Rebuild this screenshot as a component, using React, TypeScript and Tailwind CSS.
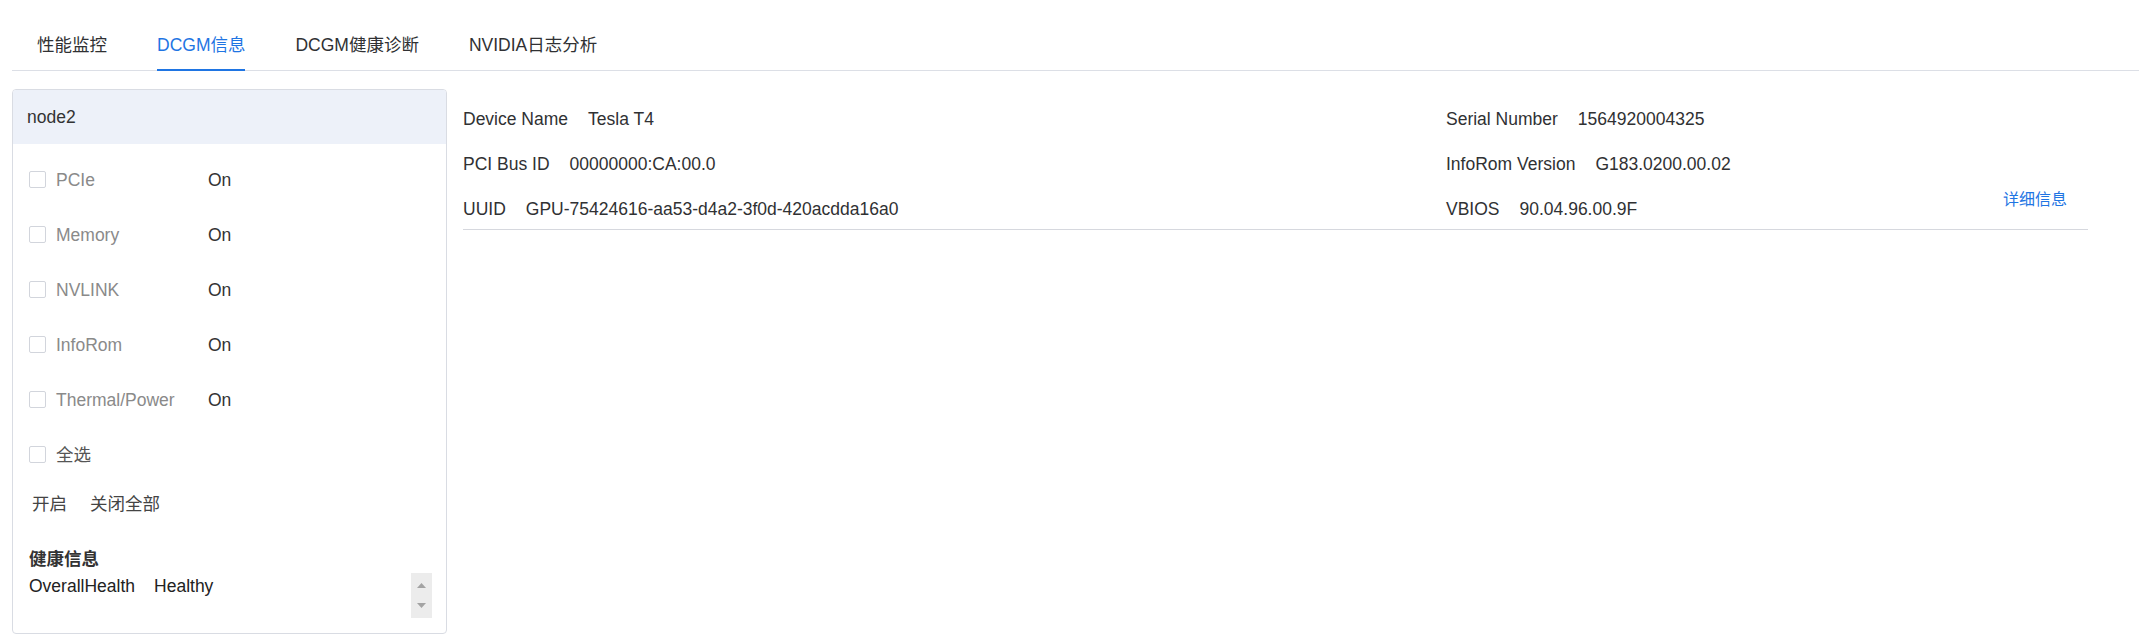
import React from "react";

const font = { fontFamily: '"Liberation Sans", "Noto Sans CJK SC", sans-serif' };

const tabs = ["性能监控", "DCGM信息", "DCGM健康诊断", "NVIDIA日志分析"];

const checks = [
  { name: "PCIe", value: "On" },
  { name: "Memory", value: "On" },
  { name: "NVLINK", value: "On" },
  { name: "InfoRom", value: "On" },
  { name: "Thermal/Power", value: "On" },
];

const Checkbox = () => (
  <span className="w-[17px] h-[17px] shrink-0 rounded-[2px] border border-[#d2d5dc] bg-white" />
);

const Field = ({ label, value }: { label: string; value: string }) => (
  <div className="flex gap-[20px]">
    <span>{label}</span>
    <span>{value}</span>
  </div>
);

export default function App() {
  const active = 1;

  return (
    <div style={font} className="w-[2139px] h-[644px] bg-white text-[17.5px] leading-[24px] text-[#303133]">
      {/* tabs */}
      <div className="ml-[12px] flex border-b border-[#dcdfe6] pt-[33px]">
        {tabs.map((t, i) => (
          <div key={t} className="px-[25px] -mb-px">
            <span
              className={`block pb-[12px] border-b-2 ${
                i === active ? "text-[#1f75e3] border-[#1f75e3]" : "border-transparent text-[#303133]"
              }`}
            >
              {t}
            </span>
          </div>
        ))}
      </div>

      <div className="flex gap-[16px] pl-[12px] pr-[51px] pt-[18px]">
        {/* node panel */}
        <div className="w-[435px] h-[545px] shrink-0 flex flex-col rounded-[4px] border border-[#d9dce3] overflow-hidden">
          <div className="h-[54px] flex items-center pl-[14px] bg-[#edf1f9] text-[#333]">node2</div>
          <div className="pt-[8px]">
            {checks.map((c) => (
              <div key={c.name} className="h-[55px] flex items-center pl-[16px]">
                <Checkbox />
                <span className="ml-[10px] w-[152px] text-[#8a8a8a]">{c.name}</span>
                <span className="text-[#333]">{c.value}</span>
              </div>
            ))}
            <div className="h-[55px] flex items-center pl-[16px]">
              <Checkbox />
              <span className="ml-[10px] text-[#555]">全选</span>
            </div>
          </div>
          <div className="mt-[10px] flex gap-[23px] pl-[19px] text-[#444]">
            <span>开启</span>
            <span>关闭全部</span>
          </div>
          <div className="mt-[30px] pl-[16px] leading-[27px] font-bold text-[#333]">健康信息</div>
          <div className="flex justify-between pl-[16px] pr-[14px]">
            <div className="flex gap-[19px] leading-[27px] text-[#222]">
              <span>OverallHealth</span>
              <span>Healthy</span>
            </div>
            <div className="w-[21px] h-[45px] bg-[#ececec] flex flex-col items-center justify-between py-[10px]">
              <svg width="9" height="5" viewBox="0 0 9 5">
                <path d="M4.5 0L9 5H0z" fill="#a3a3a3" />
              </svg>
              <svg width="9" height="5" viewBox="0 0 9 5">
                <path d="M0 0h9L4.5 5z" fill="#a3a3a3" />
              </svg>
            </div>
          </div>
        </div>

        {/* device info */}
        <div className="flex-1 pt-[18px]">
          <div className="flex flex-col gap-[21px] pb-[8px] border-b border-[#d6d8de]">
            <div className="flex">
              <div className="w-[983px]">
                <Field label="Device Name" value="Tesla T4" />
              </div>
              <Field label="Serial Number" value="1564920004325" />
            </div>
            <div className="flex">
              <div className="w-[983px]">
                <Field label="PCI Bus ID" value="00000000:CA:00.0" />
              </div>
              <Field label="InfoRom Version" value="G183.0200.00.02" />
            </div>
            <div className="flex">
              <div className="w-[983px]">
                <Field label="UUID" value="GPU-75424616-aa53-d4a2-3f0d-420acdda16a0" />
              </div>
              <Field label="VBIOS" value="90.04.96.00.9F" />
              <span className="ml-auto mr-[21px] -mt-[9px] text-[16px] text-[#1f75e3]">详细信息</span>
            </div>
          </div>
        </div>
      </div>
    </div>
  );
}
